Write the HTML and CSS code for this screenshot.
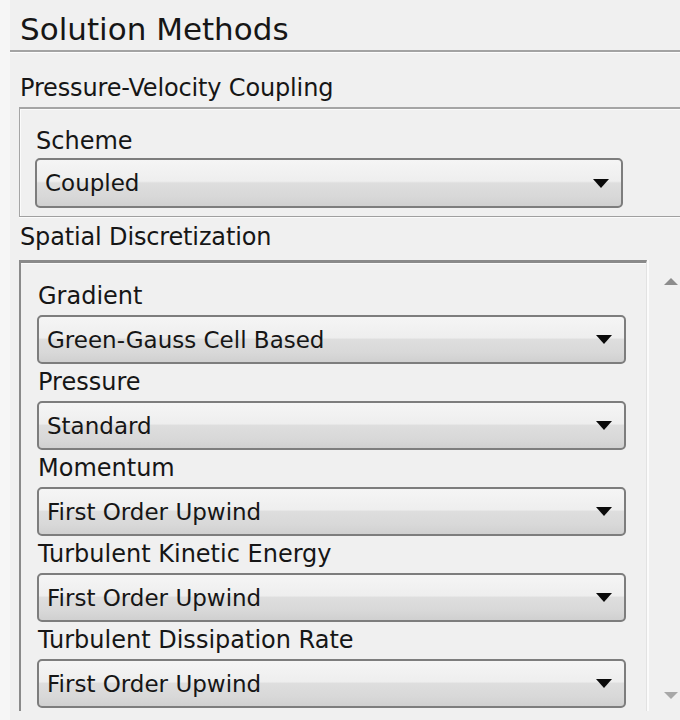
FILE: index.html
```html
<!DOCTYPE html>
<html lang="en">
<head>
<meta charset="utf-8">
<title>Solution Methods</title>
<link rel="stylesheet" href="styles.css">
</head>
<body>
<div class="panel">
  <div class="title">Solution Methods</div>

  <div class="section-label">Pressure-Velocity Coupling</div>
  <div class="group">
    <div class="field-label">Scheme</div>
    <div class="combo"><span class="combo-value">Coupled</span><span class="combo-arrow"></span></div>
  </div>

  <div class="section-label section-label--spatial">Spatial Discretization</div>
  <div class="scroll-pane">
    <div class="scroll-content">
      <div class="field-label">Gradient</div>
      <div class="combo"><span class="combo-value">Green-Gauss Cell Based</span><span class="combo-arrow"></span></div>
      <div class="field-label">Pressure</div>
      <div class="combo"><span class="combo-value">Standard</span><span class="combo-arrow"></span></div>
      <div class="field-label">Momentum</div>
      <div class="combo"><span class="combo-value">First Order Upwind</span><span class="combo-arrow"></span></div>
      <div class="field-label">Turbulent Kinetic Energy</div>
      <div class="combo"><span class="combo-value">First Order Upwind</span><span class="combo-arrow"></span></div>
      <div class="field-label">Turbulent Dissipation Rate</div>
      <div class="combo"><span class="combo-value">First Order Upwind</span><span class="combo-arrow"></span></div>
    </div>
    <div class="scrollbar">
      <span class="sb-arrow sb-up"></span>
      <span class="sb-arrow sb-down"></span>
    </div>
  </div>
</div>
</body>
</html>
```

FILE: styles.css
```css
html, body {
  margin: 0;
  padding: 0;
}

body {
  width: 680px;
  height: 720px;
  overflow: hidden;
  background: linear-gradient(to right, #f6f6f6 10px, #f0f0f0 10px);
  font-family: "DejaVu Sans", "Liberation Sans", sans-serif;
  color: #161616;
}

.panel {
  display: flex;
  flex-direction: column;
}

/* panel heading with etched separator */
.title {
  height: 52px;
  margin-left: 10px;
  padding-left: 10px;
  box-sizing: border-box;
  font-size: 31px;
  line-height: 59px;
  white-space: nowrap;
  border-bottom: 2px solid #a3a3a3;
  box-shadow: 0 1px 0 #fdfdfd;
}

.section-label {
  height: 55px;
  padding-left: 20px;
  box-sizing: border-box;
  font-size: 24px;
  letter-spacing: -0.15px;
  line-height: 72px;
  white-space: nowrap;
}

.section-label--spatial {
  height: 43px;
  line-height: 41px;
}

/* etched group frame */
.group {
  margin-left: 19px;
  padding: 12px 0 8px 15px;
  border-top: 2px solid #a5a5a5;
  border-left: 1px solid #a5a5a5;
  border-bottom: 1px solid #a0a0a0;
  box-shadow: inset 1px 1px 0 #fbfbfb, 0 1px 0 #fbfbfb;
}

.group .field-label {
  line-height: 40px;
}

.group .combo {
  width: 588px;
  height: 50px;
}

.field-label {
  height: 37px;
  font-size: 24px;
  line-height: 37px;
  padding-left: 1px;
  white-space: nowrap;
}

/* drop-down list */
.combo {
  box-sizing: border-box;
  display: flex;
  align-items: center;
  justify-content: space-between;
  width: 589px;
  height: 49px;
  padding: 0 12px 0 8px;
  border: 2px solid #7d7d7d;
  border-radius: 5px;
  background: linear-gradient(to bottom, #f5f5f5 0%, #eeeeee 46%, #dedede 50%, #d8d8d8 80%, #d0d0d0 100%);
  font-size: 23px;
}

.combo-value {
  white-space: nowrap;
}

.combo-arrow {
  width: 0;
  height: 0;
  border-left: 8px solid transparent;
  border-right: 8px solid transparent;
  border-top: 9px solid #0a0a0a;
}

/* sunken scroll pane */
.scroll-pane {
  display: flex;
  height: 451px;
  margin-left: 19px;
}

.scroll-content {
  flex: 1;
  padding: 15px 0 0 16px;
  border-top: 3px solid #8a8a8a;
  border-left: 2px solid #8a8a8a;
  border-right: 1px solid #e2e2e2;
  box-shadow: inset 0 6px 0 -5px #fafafa;
  overflow: hidden;
}

.scrollbar {
  width: 33px;
  box-sizing: border-box;
  border-left: 2px solid #fbfbfb;
  display: flex;
  flex-direction: column;
  justify-content: space-between;
  align-items: center;
  padding: 18px 0 12px 12px;
}

.sb-arrow {
  width: 0;
  height: 0;
  border-left: 7px solid transparent;
  border-right: 7px solid transparent;
}

.sb-up {
  border-bottom: 7px solid #8c8c8c;
}

.sb-down {
  border-top: 7px solid #a8a8a8;
}
```
